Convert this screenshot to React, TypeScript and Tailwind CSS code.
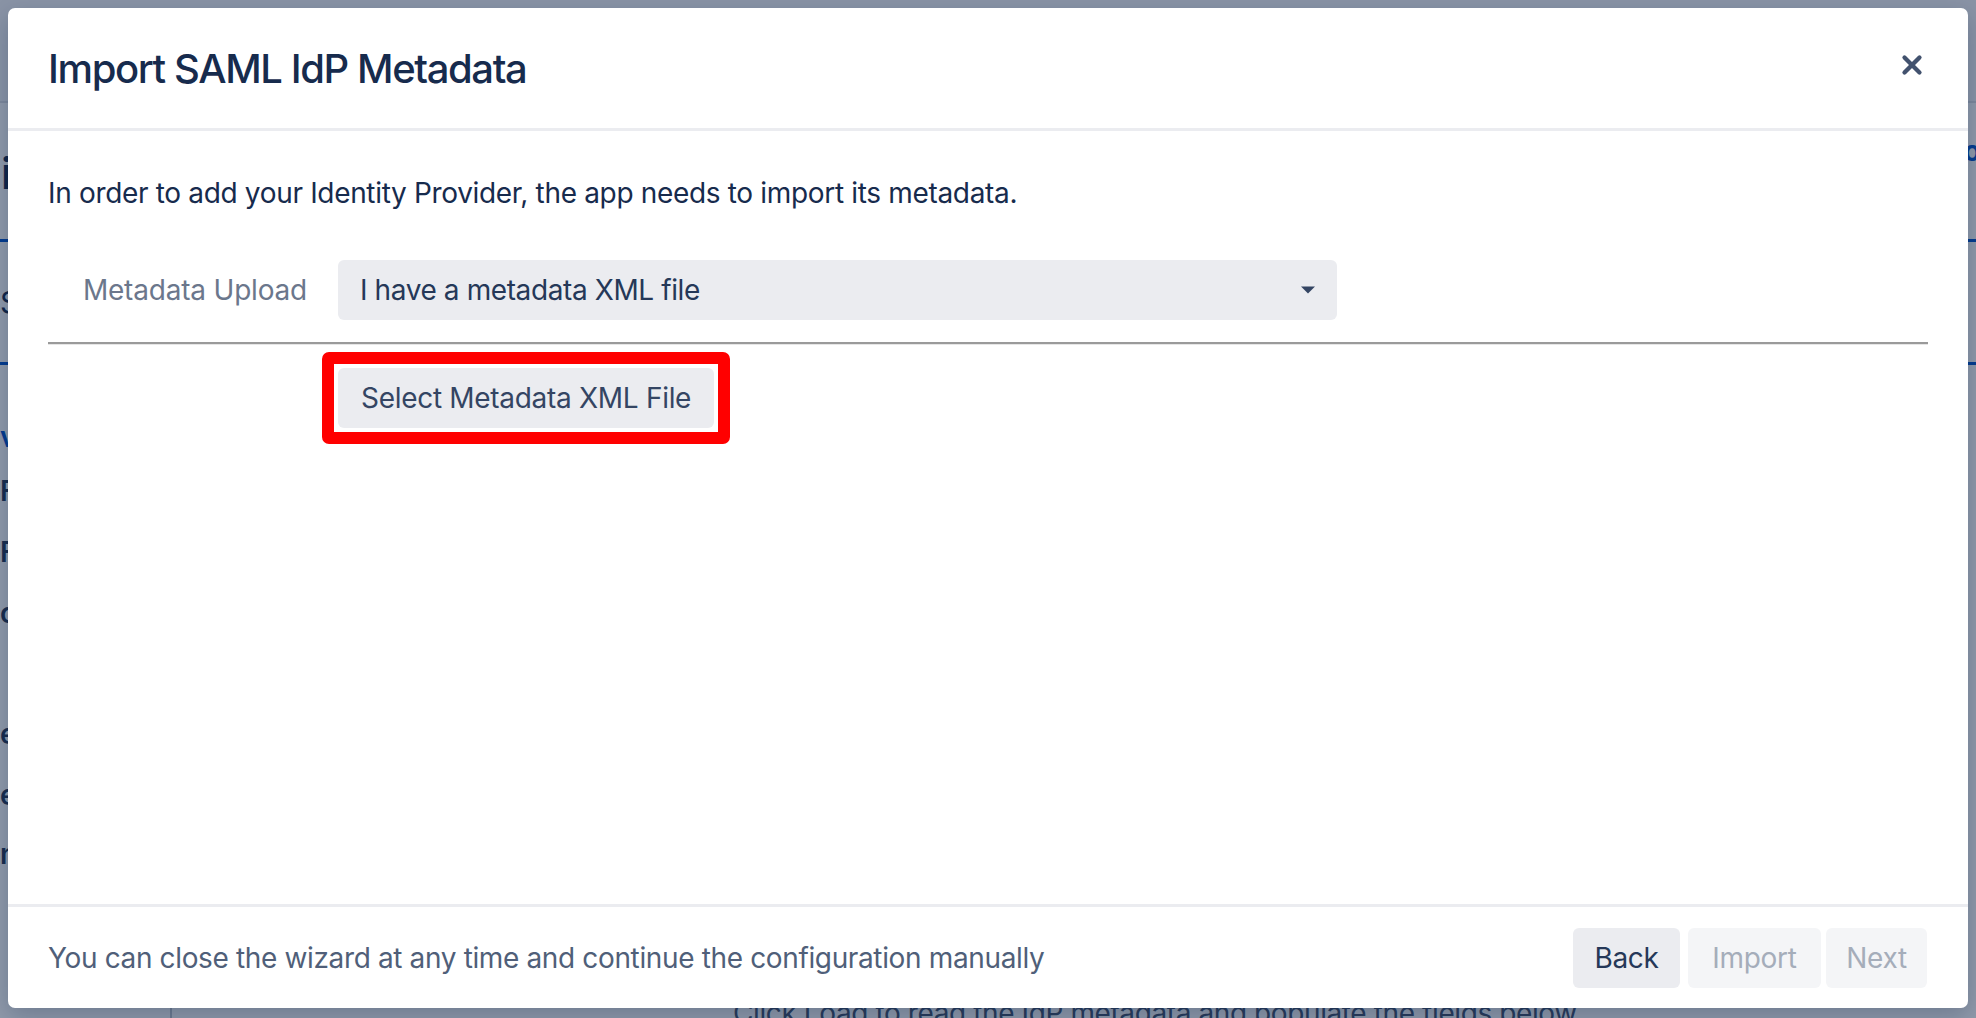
import { X } from 'lucide-react';

const font = "font-['Inter','Noto_Sans','Liberation_Sans',sans-serif]";

function BackgroundPage() {
  const side = [
    { ch: 'v', mt: 'mt-[52px]', blue: true },
    { ch: 'F', mt: 'mt-[14px]' },
    { ch: 'F', mt: 'mt-[21px]' },
    { ch: 'c', mt: 'mt-[21px]' },
    { ch: 'e', mt: 'mt-[81px]' },
    { ch: 'e', mt: 'mt-[21px]' },
    { ch: 'n', mt: 'mt-[19px]' },
  ];

  return (
    <div className="flex h-full flex-col bg-white text-[#172b4d]">
      <div className="h-[103px] shrink-0 border-b-2 border-[#dfe1e6] bg-[#f4f5f7]" />
      <div className="flex h-[139px] shrink-0 items-center justify-between border-b-[3px] border-[#0052cc]">
        <span className="mt-[4px] pl-[1px] text-[44px] font-semibold leading-none">i</span>
        <span className="-mt-[40px] -mr-[16px] text-[28px] font-bold text-[#0052cc]">or</span>
      </div>
      <div className="flex h-[123px] shrink-0 items-center border-b-[3px] border-[#0052cc]">
        <span className="text-[30px] leading-none">S</span>
      </div>
      <div className="flex flex-1">
        <aside className="flex w-[172px] shrink-0 flex-col border-r-2 border-[#c1c7d0] text-[28px] leading-[40px] font-semibold">
          {side.map((s, i) => (
            <span key={i} className={`${s.mt} ${s.blue ? 'text-[#0052cc]' : 'text-[#253858]'}`}>
              {s.ch}
            </span>
          ))}
        </aside>
        <main className="flex-1 pt-[628px] pl-[561px]">
          <p className="text-[28px] leading-[40px] tracking-[-0.4px] text-[#42526e]">
            Click Load to read the IdP metadata and populate the fields below.
          </p>
        </main>
      </div>
    </div>
  );
}

function Caret() {
  return (
    <svg width="16" height="8" viewBox="0 0 16 8" className="shrink-0">
      <path d="M1 0.5h14L8 7.5z" fill="#344563" />
    </svg>
  );
}

export default function App() {
  return (
    <div className={`relative h-[1018px] w-[1976px] overflow-hidden ${font}`}>
      <BackgroundPage />
      <div className="absolute inset-0 bg-[#091e42]/45" />

      <div className="absolute inset-0 flex justify-center pt-[8px]">
        <div className="flex h-[1000px] w-[1960px] flex-col rounded-[7px] bg-white shadow-[0_8px_24px_rgba(9,30,66,0.25)]">
          <header className="flex h-[123px] shrink-0 items-center justify-between border-b-[3px] border-[#ebecf0] pl-[40px] pr-[36px]">
            <h1 className="mt-[2px] text-[40px] font-medium tracking-[-1.4px] text-[#172b4d]">
              Import SAML IdP Metadata
            </h1>
            <button className="-mt-[6px] flex h-[40px] w-[40px] items-center justify-center text-[#42526e]">
              <X size={30} strokeWidth={3.4} />
            </button>
          </header>

          <section className="flex-1 px-[40px] pt-[42px]">
            <p className="text-[28px] leading-[40px] tracking-[-0.33px] text-[#172b4d]">
              In order to add your Identity Provider, the app needs to import its metadata.
            </p>

            <div className="mt-[47px] flex items-center">
              <label className="w-[290px] shrink-0 pr-[31px] text-right text-[28px] tracking-[-0.2px] text-[#6b778c]">
                Metadata Upload
              </label>
              <div className="flex h-[60px] w-[999px] items-center justify-between rounded-[6px] bg-[#ebecf0] pl-[22px] pr-[21px]">
                <span className="text-[28px] tracking-[-0.4px] text-[#253858]">I have a metadata XML file</span>
                <Caret />
              </div>
            </div>

            <div className="mt-[22px] border-t-2 border-b border-t-[#9a9a9a] border-b-[#e6e6e6]" />

            <div className="mt-[7px] ml-[274px] inline-flex rounded-[7px] border-[12px] border-[#ff0000] bg-white p-[4px]">
              <button className="flex h-[60px] items-center rounded-[6px] bg-[#ebecf0] px-[23px] text-[28px] tracking-[-0.3px] text-[#344563]">
                Select Metadata XML File
              </button>
            </div>
          </section>

          <footer className="flex h-[104px] shrink-0 items-center justify-between border-t-[3px] border-[#ebecf0] pl-[40px] pr-[41px]">
            <p className="text-[28px] tracking-[-0.36px] text-[#505f79]">
              You can close the wizard at any time and continue the configuration manually
            </p>
            <div className="flex items-center">
              <button className="h-[60px] w-[107px] rounded-[6px] bg-[#ebecf0] text-[28px] tracking-[-0.3px] text-[#253858]">
                Back
              </button>
              <button className="ml-[8px] h-[60px] w-[133px] rounded-[6px] bg-[#f4f5f7] text-[28px] tracking-[-0.3px] text-[#a5adba]">
                Import
              </button>
              <button className="ml-[5px] h-[60px] w-[101px] rounded-[6px] bg-[#f4f5f7] text-[28px] tracking-[-0.3px] text-[#a5adba]">
                Next
              </button>
            </div>
          </footer>
        </div>
      </div>
    </div>
  );
}
